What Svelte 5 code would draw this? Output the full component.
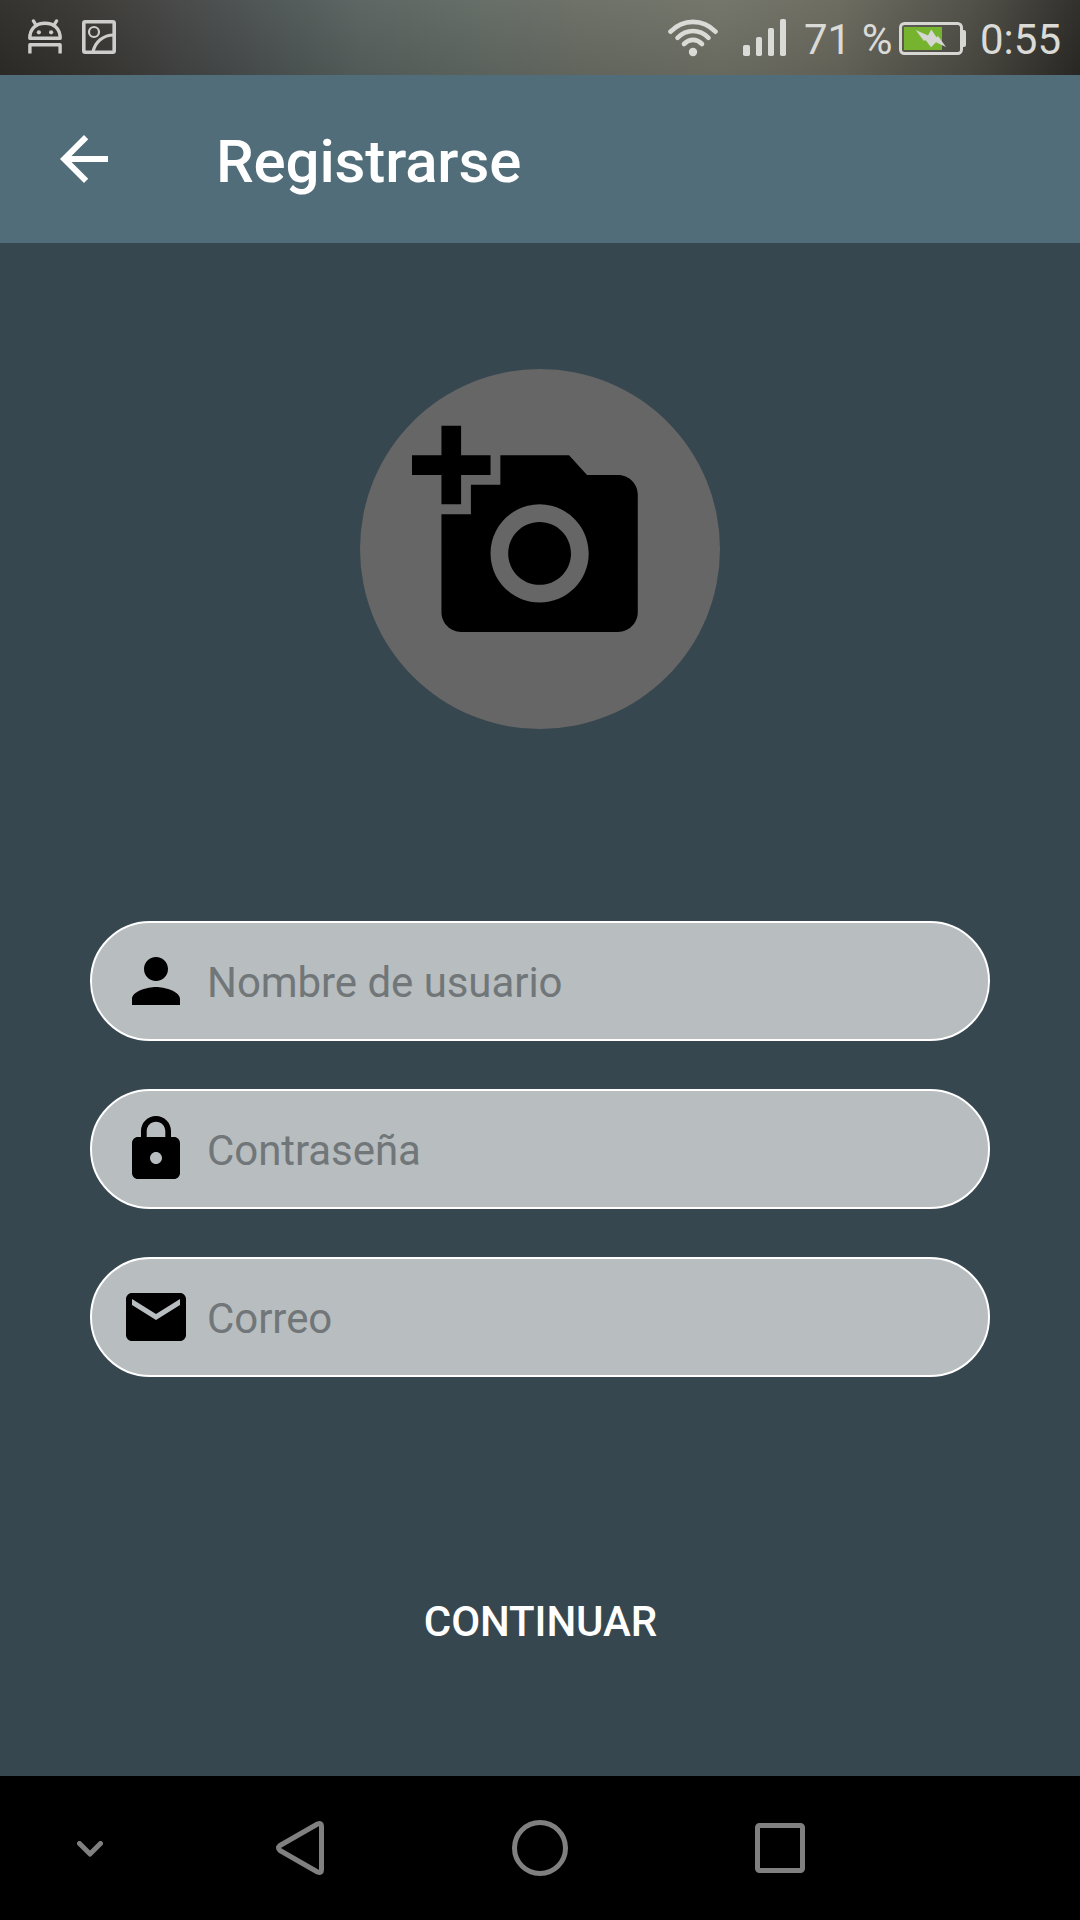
<script>
  const fields = [
    {
      name: 'username',
      type: 'text',
      label: 'Nombre de usuario',
      icon: 'M12 12c2.21 0 4-1.79 4-4s-1.79-4-4-4-4 1.79-4 4 1.79 4 4 4zm0 2c-2.67 0-8 1.34-8 4v2h16v-2c0-2.66-5.33-4-8-4z'
    },
    {
      name: 'password',
      type: 'password',
      label: 'Contraseña',
      icon: 'M18 8h-1V6c0-2.76-2.24-5-5-5S7 3.24 7 6v2H6c-1.1 0-2 .9-2 2v10c0 1.1.9 2 2 2h12c1.1 0 2-.9 2-2V10c0-1.1-.9-2-2-2zm-6 9c-1.1 0-2-.9-2-2s.9-2 2-2 2 .9 2 2-.9 2-2 2zm3.1-9H8.9V6c0-1.71 1.39-3.1 3.1-3.1 1.71 0 3.1 1.39 3.1 3.1v2z'
    },
    {
      name: 'email',
      type: 'email',
      label: 'Correo',
      icon: 'M20 4H4c-1.1 0-1.99.9-1.99 2L2 18c0 1.1.9 2 2 2h16c1.1 0 2-.9 2-2V6c0-1.1-.9-2-2-2zm0 4l-8 5-8-5V6l8 5 8-5v2z'
    }
  ];
</script>

<div class="screen">
  <header class="status">
    <svg class="android" width="34" height="36" viewBox="0 0 34 36" fill="none" stroke="#cdcdcb" stroke-width="3.4">
      <path d="M1.8 19.3C1.8 9 8.5 4.2 17 4.2s15.2 4.8 15.2 15.1z" stroke-linejoin="round" />
      <path d="M5.5 2l2.7 4.5M28.5 2l-2.7 4.5" stroke-linecap="round" />
      <path d="M1.9 34.5V25.7h30.2v8.8" stroke-linejoin="round" />
      <circle cx="10.9" cy="13.3" r="2.1" fill="#cdcdcb" stroke="none" />
      <circle cx="23.1" cy="13.3" r="2.1" fill="#cdcdcb" stroke="none" />
    </svg>
    <svg class="picture" width="34" height="34" viewBox="0 0 34 34" fill="none" stroke="#cdcdcb">
      <rect x="1.8" y="1.8" width="30.4" height="30.4" rx="1.5" stroke-width="3.6" />
      <circle cx="12" cy="12" r="5" stroke-width="2.2" />
      <path d="M11 32C13 22 21 15 32 15" stroke-width="3.2" />
    </svg>
    <svg class="wifi" width="50" height="38" viewBox="0 0 50 38" fill="none" stroke="#dadad7" stroke-width="4.6" stroke-linecap="round">
      <path d="M2.5 12.7C15-.4 35-.4 47.5 12.7" />
      <path d="M9.5 18.8c9-9 22-9 31 0" />
      <path d="M16 25c5.5-5.5 12.5-5.5 18 0" />
      <circle cx="25" cy="33" r="4.2" fill="#dadad7" stroke="none" />
    </svg>
    <svg class="signal" width="44" height="38" viewBox="0 0 44 38" fill="#dadad7">
      <rect x="0" y="26" width="7" height="11" rx="1.8" />
      <rect x="13" y="18" width="6" height="19" rx="1.8" />
      <rect x="25" y="9" width="6" height="28" rx="1.8" />
      <rect x="37" y="0" width="6" height="37" rx="1.8" />
    </svg>
    <span class="percent">71 %</span>
    <svg class="battery" width="67" height="33" viewBox="0 0 67 33">
      <rect x="1.5" y="1.5" width="61" height="30" rx="4" fill="none" stroke="#d6d6d3" stroke-width="3" />
      <path d="M64 8h1q2 0 2 2v13q0 2-2 2h-1z" fill="#d6d6d3" />
      <rect x="5" y="5" width="38" height="23" fill="#76b42f" />
      <path d="M16.7 8L29 13.5 32.3 7.5 37.5 15.3 39 14 47 25 37 20.3 32 25.3 26.8 18.2 24.7 18.8z" fill="#d6d6d3" />
    </svg>
    <span class="clock">0:55</span>
  </header>

  <div class="appbar">
    <svg width="72" height="72" viewBox="0 0 24 24" fill="#fff">
      <path d="M20 11H7.83l5.59-5.59L12 4l-8 8 8 8 1.41-1.41L7.83 13H20v-2z" />
    </svg>
    <h1>Registrarse</h1>
  </div>

  <main>
    <div class="avatar">
      <svg width="235.6" height="235.6" viewBox="0 0 24 24">
        <path d="M3 4V1h2v3h3v2H5v3H3V6H0V4h3zm3 6V7h3V4h7l1.83 2H21c1.1 0 2 .9 2 2v12c0 1.1-.9 2-2 2H5c-1.1 0-2-.9-2-2V10h3zm7 9c2.76 0 5-2.24 5-5s-2.24-5-5-5-5 2.24-5 5 2.24 5 5 5zm-3.2-5c0 1.77 1.43 3.2 3.2 3.2s3.2-1.43 3.2-3.2-1.43-3.2-3.2-3.2-3.2 1.43-3.2 3.2z" />
      </svg>
    </div>

    <form>
      {#each fields as field (field.name)}
        <label class="field">
          <svg width="72" height="72" viewBox="0 0 24 24"><path d={field.icon} /></svg>
          <input type={field.type} name={field.name} placeholder={field.label} />
        </label>
      {/each}
      <button type="button">CONTINUAR</button>
    </form>
  </main>

  <nav>
    <svg class="hide" width="26" height="16" viewBox="0 0 26 16" fill="none" stroke="#808080" stroke-width="5" stroke-linecap="round" stroke-linejoin="round">
      <path d="M2.5 2.5L13 13 23.5 2.5" />
    </svg>
    <svg class="back" width="48" height="54" viewBox="0 0 48 54" fill="none" stroke="#808080" stroke-width="5" stroke-linejoin="round">
      <path d="M4 24.5Q1 27 4 29.5L41.5 51Q45.5 52.5 45.5 49V5Q45.5 1.5 41.5 3z" />
    </svg>
    <svg class="home" width="56" height="56" viewBox="0 0 56 56" fill="none" stroke="#808080" stroke-width="5">
      <circle cx="28" cy="28" r="25.5" />
    </svg>
    <svg class="recent" width="50" height="50" viewBox="0 0 50 50" fill="none" stroke="#808080" stroke-width="5">
      <rect x="2.5" y="2.5" width="45" height="45" rx="2" />
    </svg>
  </nav>
</div>

<style>
  :global(body) {
    margin: 0;
    background: #37474f;
  }
  .screen {
    width: 1080px;
    height: 1920px;
    display: flex;
    flex-direction: column;
    overflow: hidden;
    background: #37474f;
    font-family: Roboto, 'Noto Sans', sans-serif;
  }
  svg {
    display: block;
    flex: none;
  }
  .status {
    box-sizing: border-box;
    height: 75px;
    flex: none;
    display: flex;
    align-items: flex-start;
    padding-left: 28px;
    font-size: 42px;
    line-height: 49px;
    color: #dadad7;
    white-space: pre;
    background:
      linear-gradient(180deg, rgba(255, 255, 255, 0.03), rgba(0, 0, 0, 0.08)),
      linear-gradient(90deg, #2f2d28 0, #383733 90px, #444545 180px, #4b5251 260px, #58625f 360px, #626a64 480px, #6b6e64 600px, #707267 720px, #69685d 840px, #4d4c44 970px, #2b2a26 1080px);
  }
  .android {
    margin-top: 19px;
  }
  .picture {
    margin: 20px 0 0 20px;
  }
  .wifi {
    margin: 19px 0 0 552px;
  }
  .signal {
    margin: 19px 0 0 25px;
  }
  .percent {
    width: 95px;
    margin: 15px 0 0 17px;
  }
  .battery {
    margin-top: 22px;
  }
  .clock {
    margin: 15px 0 0 14px;
  }
  .appbar {
    height: 168px;
    flex: none;
    display: flex;
    align-items: center;
    gap: 96px;
    padding-left: 48px;
    background: #506d79;
  }
  h1 {
    margin: 5px 0 0;
    font-size: 60px;
    line-height: 70px;
    font-weight: 500;
    letter-spacing: -0.15px;
    color: #fff;
  }
  main {
    flex: 1;
    display: flex;
    flex-direction: column;
    align-items: center;
    padding-top: 126px;
  }
  .avatar {
    box-sizing: border-box;
    width: 360px;
    height: 360px;
    padding: 46.5px 0 0 52px;
    border-radius: 50%;
    background: #666;
  }
  form {
    width: 900px;
    margin-top: 192px;
    display: flex;
    flex-direction: column;
    gap: 48px;
  }
  .field {
    box-sizing: border-box;
    height: 120px;
    display: flex;
    align-items: center;
    gap: 15px;
    padding: 0 28px;
    border: 2px solid #fff;
    border-radius: 60px;
    background: #b8bdc0;
  }
  input {
    flex: 1;
    min-width: 0;
    height: 60px;
    margin-top: 3px;
    padding: 0;
    border: 0;
    outline: 0;
    background: none;
    font: 400 42px Roboto, 'Noto Sans', sans-serif;
    letter-spacing: -0.06px;
    color: #000;
  }
  input::placeholder {
    color: #717678;
    opacity: 1;
  }
  button {
    align-self: center;
    margin-top: 148px;
    padding: 24px 24px 24px 25px;
    border: 0;
    background: none;
    font: 500 42px/50px Roboto, 'Noto Sans', sans-serif;
    letter-spacing: -0.1px;
    color: #fff;
  }
  nav {
    height: 144px;
    flex: none;
    display: flex;
    align-items: center;
    background: #000;
  }
  .hide {
    margin: 1px 0 0 77px;
  }
  .back {
    margin-left: 173px;
  }
  .home {
    margin-left: 188px;
  }
  .recent {
    margin-left: 187px;
  }
</style>
